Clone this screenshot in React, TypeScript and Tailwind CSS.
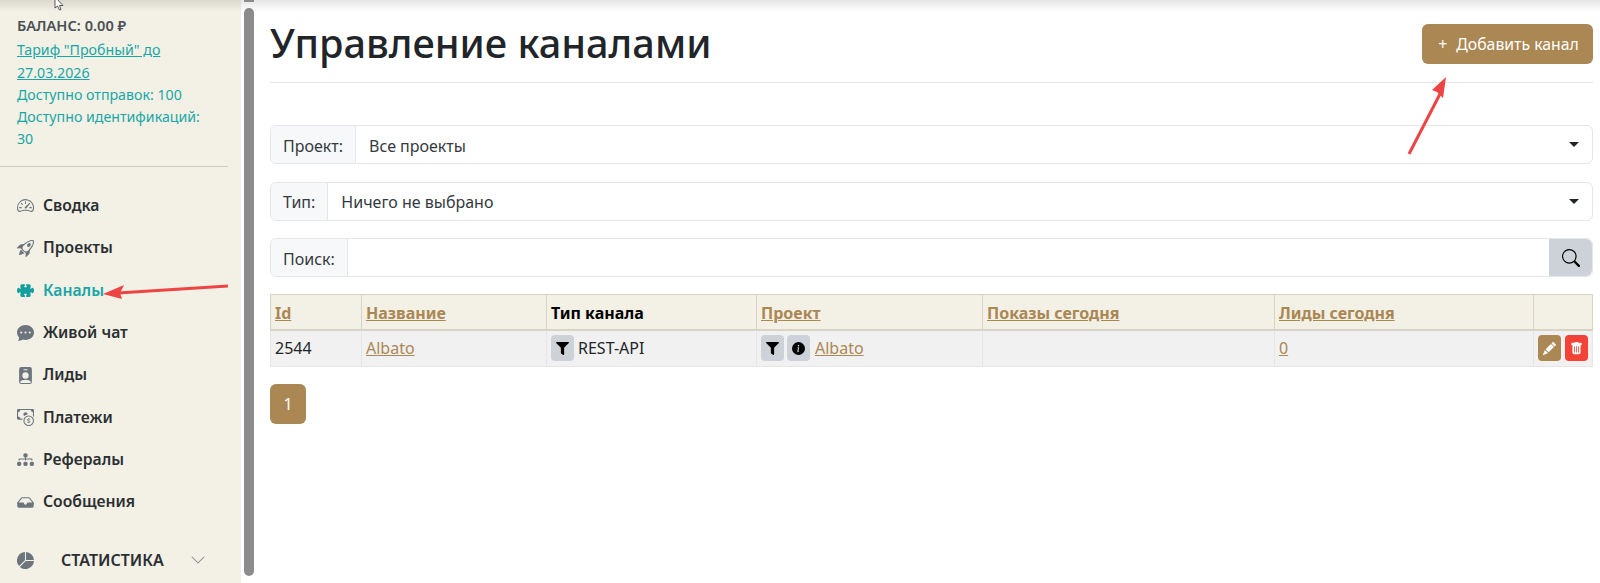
import type { ReactNode } from "react";
import {
  BsChatDotsFill,
  BsCashCoin,
  BsChevronDown,
  BsDiagram3Fill,
  BsInboxFill,
  BsInfoCircleFill,
  BsPencilFill,
  BsPersonBadgeFill,
  BsPieChartFill,
  BsPuzzleFill,
  BsRocketTakeoff,
  BsSearch,
  BsSpeedometer2,
  BsTrashFill,
} from "react-icons/bs";
import { FaFilter } from "react-icons/fa";

const NAV = [
  { label: "Сводка", icon: <BsSpeedometer2 /> },
  { label: "Проекты", icon: <BsRocketTakeoff /> },
  { label: "Каналы", icon: <BsPuzzleFill />, active: true },
  { label: "Живой чат", icon: <BsChatDotsFill /> },
  { label: "Лиды", icon: <BsPersonBadgeFill /> },
  { label: "Платежи", icon: <BsCashCoin /> },
  { label: "Рефералы", icon: <BsDiagram3Fill /> },
  { label: "Сообщения", icon: <BsInboxFill /> },
];

const linkCls = "text-[#ab8753] underline";
const thCls = "border border-[#d8d3c3] border-b-2 px-[4px] pt-[2px] text-left font-bold";
const tdCls = "border border-[#e6e6e6] px-[4px] align-middle";

function FilterButton({ children }: { children: ReactNode }) {
  return (
    <span className="flex h-[26px] w-[23px] items-center justify-center rounded-[4px] bg-[#cdd2d9] text-[13px] text-black">
      {children}
    </span>
  );
}

function SelectGroup({ label, value }: { label: string; value: string }) {
  return (
    <div className="flex h-[39px] rounded-[6px] border border-[#e4e6ea] bg-white">
      <span className="flex items-center rounded-l-[6px] border-r border-[#e4e6ea] bg-[#f7f8fa] px-[12px] pt-[2px] text-[#343a40]">
        {label}
      </span>
      <span className="flex flex-1 items-center pl-[13px] pt-[2px] text-[#343a40]">{value}</span>
      <span className="mr-[13px] mt-[16px] h-0 w-0 border-x-[5px] border-t-[5px] border-x-transparent border-t-[#212529]" />
    </div>
  );
}

export default function App() {
  return (
    <div className="relative flex h-[583px] overflow-hidden bg-white font-['Noto_Sans',sans-serif] text-[16px] text-[#212529]">
      {/* Боковое меню */}
      <aside className="w-[241px] shrink-0 bg-[#f3f1e5] pt-[14px]">
        <div className="px-[17px] text-[14.2px] leading-[22.3px] text-[#19a6a6]">
          <div className="mb-[3px] text-[14.6px] font-semibold text-[#4a4f55]">БАЛАНС: 0.00 ₽</div>
          <a className="underline">
            Тариф "Пробный" до
            <br />
            27.03.2026
          </a>
          <div>Доступно отправок: 100</div>
          <div>
            Доступно идентификаций:
            <br />
            30
          </div>
        </div>
        <div className="mr-[13px] mt-[15px] border-t border-[#cfccbd]" />
        <nav className="mt-[18px]">
          {NAV.map((n) => (
            <div key={n.label} className="flex h-[42.3px] items-center pl-[17px] text-[15.7px] font-semibold">
              <span className={`w-[26px] text-[17px] ${n.active ? "text-[#109e9e]" : "text-[#6c757d]"}`}>
                {n.icon}
              </span>
              <span className={n.active ? "text-[#19a6a6]" : "text-[#2b2f33]"}>{n.label}</span>
            </div>
          ))}
        </nav>
        <div className="mt-[16px] flex h-[42px] items-center pl-[17px] font-semibold text-[#2b2f33]">
          <BsPieChartFill className="text-[17px] text-[#6c757d]" />
          <span className="ml-[27px]">СТАТИСТИКА</span>
          <BsChevronDown className="ml-[26px] text-[16px] text-[#8a8a8a]" />
        </div>
      </aside>

      {/* Полоса прокрутки */}
      <div className="w-[29px] shrink-0 pl-[3px] pt-[8px]">
        <div className="h-[568px] w-[10px] rounded-full bg-[#8c8c8c]" />
      </div>

      <main className="flex-1 pr-[7px]">
        <div className="flex h-[83px] items-start justify-between border-b border-[#e4e6ea]">
          <h1 className="mt-[13px] text-[39.7px] font-medium leading-[60px]">Управление каналами</h1>
          <button className="mt-[24px] flex h-[40px] w-[171px] items-center justify-center gap-[9px] rounded-[6px] bg-[#ab8753] pl-[2px] pt-[1px] text-[15.8px] text-white">
            <span>+</span>
            <span>Добавить канал</span>
          </button>
        </div>

        <div className="mt-[42px] flex flex-col gap-[17.5px]">
          <SelectGroup label="Проект:" value="Все проекты" />
          <SelectGroup label="Тип:" value="Ничего не выбрано" />
          <div className="flex h-[39px] rounded-[6px] border border-[#e4e6ea] bg-white">
            <span className="flex items-center rounded-l-[6px] border-r border-[#e4e6ea] bg-[#f7f8fa] px-[12px] pt-[2px] text-[#343a40]">
              Поиск:
            </span>
            <span className="flex-1" />
            <span className="flex w-[43px] items-center justify-center rounded-r-[6px] bg-[#cdd2d9] text-[18px] text-black">
              <BsSearch />
            </span>
          </div>
        </div>

        <table className="mt-[17px] w-[1323px] table-fixed border-collapse">
          <thead>
            <tr className="h-[35px] bg-[#f3f1e5]">
              <th className={`${thCls} w-[91px]`}><a className={linkCls}>Id</a></th>
              <th className={`${thCls} w-[185px]`}><a className={linkCls}>Название</a></th>
              <th className={`${thCls} w-[210px] text-black`}>Тип канала</th>
              <th className={`${thCls} w-[226px]`}><a className={linkCls}>Проект</a></th>
              <th className={`${thCls} w-[292px]`}><a className={linkCls}>Показы сегодня</a></th>
              <th className={`${thCls} w-[259px]`}><a className={linkCls}>Лиды сегодня</a></th>
              <th className={thCls} />
            </tr>
          </thead>
          <tbody>
            <tr className="h-[37px] bg-[#f1f1f1]">
              <td className={tdCls}>2544</td>
              <td className={tdCls}><a className={linkCls}>Albato</a></td>
              <td className={tdCls}>
                <div className="flex items-center gap-[4px]">
                  <FilterButton><FaFilter /></FilterButton>
                  <span>REST-API</span>
                </div>
              </td>
              <td className={tdCls}>
                <div className="flex items-center gap-[3px]">
                  <FilterButton><FaFilter /></FilterButton>
                  <FilterButton><BsInfoCircleFill /></FilterButton>
                  <a className={`${linkCls} ml-[2px]`}>Albato</a>
                </div>
              </td>
              <td className={tdCls} />
              <td className={tdCls}><a className={linkCls}>0</a></td>
              <td className={tdCls}>
                <div className="flex justify-center gap-[4px] text-[13px] text-white">
                  <span className="flex h-[26px] w-[23px] items-center justify-center rounded-[4px] bg-[#ab8753]">
                    <BsPencilFill />
                  </span>
                  <span className="flex h-[26px] w-[23px] items-center justify-center rounded-[4px] bg-[#f44336]">
                    <BsTrashFill />
                  </span>
                </div>
              </td>
            </tr>
          </tbody>
        </table>

        <button className="mt-[17px] h-[40px] w-[36px] rounded-[6px] bg-[#ab8753] text-white">1</button>
      </main>

      {/* Тень сверху */}
      <div className="absolute inset-x-0 top-0 h-[12px] bg-gradient-to-b from-black/10 to-transparent" />
      <div className="absolute left-[244px] top-0 h-[2px] w-[10px] bg-[#8c8c8c]" />

      {/* Стрелки поверх скриншота */}
      <svg className="absolute left-0 top-0" width="1600" height="583" fill="none">
        <path d="M228 286 L118 293" stroke="#ef4444" strokeWidth="3" />
        <path d="M103 294 L124 285 L120 293 L122 299 Z" fill="#ef4444" />
        <path d="M1409 154 L1441 92" stroke="#ef4444" strokeWidth="3" />
        <path d="M1446 77 L1443 98 L1437 92 L1432 90 Z" fill="#ef4444" />
      </svg>

      {/* Курсор */}
      <svg className="absolute left-[54px] top-0" width="11" height="11" viewBox="0 0 11 11">
        <path d="M1 -3 L1 8 L3.5 6 L5.5 10 L7 9.5 L5.5 5.5 L9 5.5 Z" fill="#fff" stroke="#333" strokeWidth="0.8" />
      </svg>
    </div>
  );
}
